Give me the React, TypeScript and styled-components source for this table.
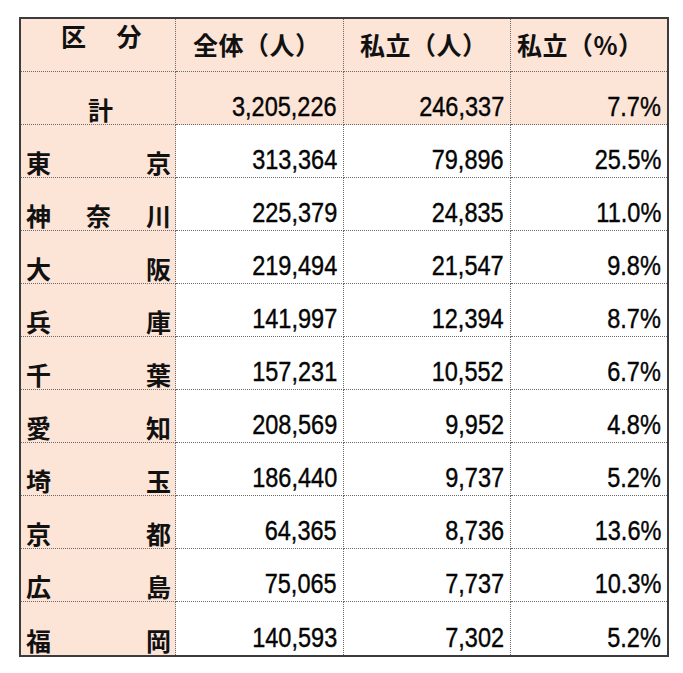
import styled, { createGlobalStyle } from "styled-components";

const GlobalStyle = createGlobalStyle`
  html, body {
    margin: 0;
    padding: 0;
    background: #ffffff;
  }
`;

const Page = styled.div`
  width: 683px;
  height: 673px;
  padding: 17px 0 0 19px;
  box-sizing: border-box;
`;

const Table = styled.div`
  display: grid;
  grid-template-columns: 155px 168px 167px 156px;
  grid-auto-rows: 53px;
  width: 650px;
  box-sizing: border-box;
  border: 2px solid #3c3c3c;
  font-family: "Noto Sans CJK JP", "Noto Sans", sans-serif;
  color: #111;
`;

const Cell = styled.div<{ $peach?: boolean; $last?: boolean; $bottom?: boolean }>`
  box-sizing: border-box;
  background: ${(p) => (p.$peach ? "#fce4d6" : "#ffffff")};
  border-right: ${(p) => (p.$last ? "none" : "1px dotted #6a6a6a")};
  border-bottom: ${(p) => (p.$bottom ? "none" : "1px dotted #6a6a6a")};
  display: flex;
  min-width: 0;
`;

const HeadCell = styled(Cell)<{ $top: number; $left: number }>`
  align-items: flex-start;
  gap: 30px;
  padding: ${(p) => p.$top}px 0 0 ${(p) => p.$left}px;
  font-size: 25px;
  font-weight: 700;
  line-height: 1.2;
  letter-spacing: 0.5px;
  white-space: nowrap;
`;

const LabelCell = styled(Cell)<{ $center?: boolean }>`
  align-items: flex-end;
  justify-content: ${(p) => (p.$center ? "center" : "space-between")};
  padding: 0 4px 0 5px;
  font-size: 25px;
  font-weight: 700;
  line-height: 1.2;
`;

const NumCell = styled(Cell)`
  align-items: flex-end;
  justify-content: flex-end;
  padding: 0 6px 0 0;
  font-family: "Liberation Sans", Arial, sans-serif;
  font-size: 28px;
  line-height: 1.2;
  color: #050505;
  -webkit-text-stroke: 0.4px #050505;
  white-space: nowrap;
`;

const Num = styled.span`
  display: inline-block;
  transform: scaleX(0.84);
  transform-origin: right bottom;
`;

type Row = { name: string; all: string; priv: string; pct: string };

const rows: Row[] = [
  { name: "東京", all: "313,364", priv: "79,896", pct: "25.5%" },
  { name: "神奈川", all: "225,379", priv: "24,835", pct: "11.0%" },
  { name: "大阪", all: "219,494", priv: "21,547", pct: "9.8%" },
  { name: "兵庫", all: "141,997", priv: "12,394", pct: "8.7%" },
  { name: "千葉", all: "157,231", priv: "10,552", pct: "6.7%" },
  { name: "愛知", all: "208,569", priv: "9,952", pct: "4.8%" },
  { name: "埼玉", all: "186,440", priv: "9,737", pct: "5.2%" },
  { name: "京都", all: "64,365", priv: "8,736", pct: "13.6%" },
  { name: "広島", all: "75,065", priv: "7,737", pct: "10.3%" },
  { name: "福岡", all: "140,593", priv: "7,302", pct: "5.2%" },
];

export default function App() {
  return (
    <>
      <GlobalStyle />
      <Page>
        <Table>
          <HeadCell $peach $top={1} $left={40}>
            <span>区</span>
            <span>分</span>
          </HeadCell>
          <HeadCell $peach $top={10} $left={17}>
            全体（人）
          </HeadCell>
          <HeadCell $peach $top={10} $left={16}>
            私立（人）
          </HeadCell>
          <HeadCell $peach $last $top={10} $left={6}>
            私立（%）
          </HeadCell>

          <LabelCell $peach $center>
            <span style={{ marginLeft: 4 }}>計</span>
          </LabelCell>
          <NumCell $peach>
            <Num>3,205,226</Num>
          </NumCell>
          <NumCell $peach>
            <Num>246,337</Num>
          </NumCell>
          <NumCell $peach $last>
            <Num>7.7%</Num>
          </NumCell>

          {rows.map((r, i) => {
            const bottom = i === rows.length - 1;
            return [
              <LabelCell key={r.name + "n"} $peach $bottom={bottom}>
                {r.name.split("").map((c, j) => (
                  <span key={j}>{c}</span>
                ))}
              </LabelCell>,
              <NumCell key={r.name + "a"} $bottom={bottom}>
                <Num>{r.all}</Num>
              </NumCell>,
              <NumCell key={r.name + "p"} $bottom={bottom}>
                <Num>{r.priv}</Num>
              </NumCell>,
              <NumCell key={r.name + "c"} $bottom={bottom} $last>
                <Num>{r.pct}</Num>
              </NumCell>,
            ];
          })}
        </Table>
      </Page>
    </>
  );
}
